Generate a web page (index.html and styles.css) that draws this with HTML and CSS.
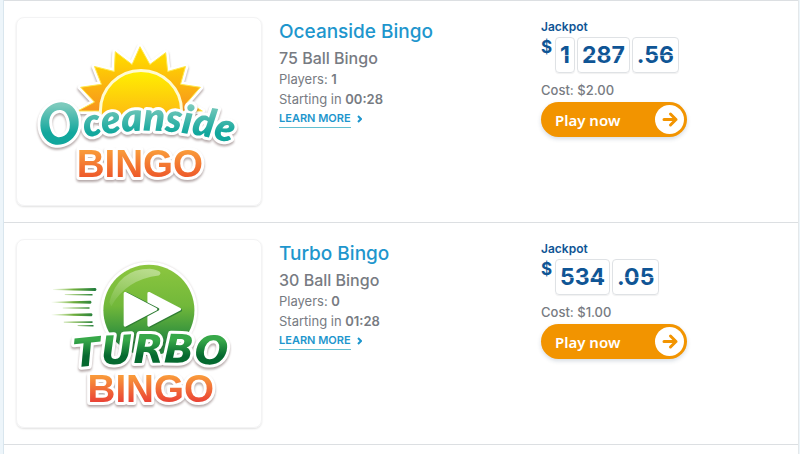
FILE: index.html
```
<!DOCTYPE html>
<html lang="en">
<head>
    <meta charset="utf-8">
    <title>Bingo Rooms</title>
    <link rel="stylesheet" href="styles.css">
</head>
<body>
    <main class="rooms">
        <section class="room">
            <div class="room-logo">
                <svg viewBox="0 0 246 189" role="img" aria-label="Oceanside Bingo">
                    <defs>
                        <linearGradient id="sun" x1="0" y1="0" x2="0" y2="1">
                            <stop offset="0.2" stop-color="#ffd500"/>
                            <stop offset="1" stop-color="#f7941e"/>
                        </linearGradient>
                        <linearGradient id="disc" x1="0" y1="0" x2="0" y2="1">
                            <stop offset="0" stop-color="#fff000"/>
                            <stop offset="1" stop-color="#fdb913"/>
                        </linearGradient>
                        <linearGradient id="sea" gradientUnits="userSpaceOnUse" x1="0" y1="88" x2="0" y2="128">
                            <stop offset="0" stop-color="#7ccabc"/>
                            <stop offset="0.7" stop-color="#12a79d"/>
                        </linearGradient>
                        <linearGradient id="orange" x1="0" y1="0" x2="0" y2="1">
                            <stop offset="0.2" stop-color="#f99a3a"/>
                            <stop offset="0.8" stop-color="#ee5a2a"/>
                        </linearGradient>
                        <path id="wave" d="M28 133 Q130 95 236 133"/>
                    </defs>
                    <path class="sticker" d="M61 94 L78 85 L64 70 L85 67 L78 49 L98 54 L99 34 L116 47 L124 29 L134 47 L150 35 L152 54 L170 49 L165 67 L185 70 L172 85 L187 94 Z" fill="#fff" stroke="#fff" stroke-width="6" stroke-linejoin="round"/>
                    <path d="M61 94 L78 85 L64 70 L85 67 L78 49 L98 54 L99 34 L116 47 L124 29 L134 47 L150 35 L152 54 L170 49 L165 67 L185 70 L172 85 L187 94 Z" fill="url(#sun)" stroke="#ffe94a" stroke-width="1"/>
                    <path d="M84 100 V94 A41 41 0 0 1 166 94 V100 Z" fill="url(#disc)" stroke="#fffbd0" stroke-width="3"/>
                    <g class="sticker">
                        <text class="logo-bingo" x="60" y="161" fill="url(#orange)">BINGO</text>
                    </g>
                    <g class="sticker">
                        <text class="logo-script" fill="url(#sea)"><textPath href="#wave"><tspan class="logo-initial">O</tspan>ceanside</textPath></text>
                    </g>
                </svg>
            </div>
            <div class="room-info">
                <h2>Oceanside Bingo</h2>
                <h3>75 Ball Bingo</h3>
                <p>Players: <b>1</b></p>
                <p>Starting in <b>00:28</b></p>
                <a class="more" href="#oceanside"><span>LEARN MORE</span>
                    <svg viewBox="0 0 5 8"><path d="M1 1 L4 4 L1 7"/></svg></a>
            </div>
            <div class="room-play">
                <h4>Jackpot</h4>
                <div class="jackpot">
                    <span class="currency">$</span>
                    <span class="digits">1</span>
                    <span class="digits">287</span>
                    <span class="digits">.56</span>
                </div>
                <p class="cost">Cost: <b>$2.00</b></p>
                <button class="play" type="button">Play now
                    <svg viewBox="0 0 29 29"><circle cx="14.5" cy="14.5" r="14.5"/><path d="M9 14.5 H21 M15.5 9 L21 14.5 L15.5 20"/></svg>
                </button>
            </div>
        </section>

        <section class="room">
            <div class="room-logo">
                <svg viewBox="0 0 246 189" role="img" aria-label="Turbo Bingo">
                    <defs>
                        <linearGradient id="ball" x1="0" y1="0" x2="0" y2="1">
                            <stop offset="0" stop-color="#8cc63f"/>
                            <stop offset="0.45" stop-color="#72b83a"/>
                            <stop offset="0.85" stop-color="#23883e"/>
                        </linearGradient>
                        <linearGradient id="shine" x1="0.6" y1="0" x2="0.2" y2="1">
                            <stop offset="0" stop-color="#fff" stop-opacity="0.4"/>
                            <stop offset="1" stop-color="#fff" stop-opacity="0.08"/>
                        </linearGradient>
                        <linearGradient id="speed" gradientUnits="userSpaceOnUse" x1="34" y1="0" x2="80" y2="0">
                            <stop offset="0" stop-color="#8cc63f" stop-opacity="0"/>
                            <stop offset="0.5" stop-color="#6fae3c"/>
                            <stop offset="1" stop-color="#1d7a3c"/>
                        </linearGradient>
                        <linearGradient id="green" gradientUnits="userSpaceOnUse" x1="0" y1="101" x2="0" y2="128">
                            <stop offset="0" stop-color="#37a849"/>
                            <stop offset="0.6" stop-color="#05692f"/>
                        </linearGradient>
                        <linearGradient id="red" x1="0" y1="0" x2="0" y2="1">
                            <stop offset="0.2" stop-color="#f99a3a"/>
                            <stop offset="0.8" stop-color="#ea4335"/>
                        </linearGradient>
                        <path id="curve" d="M58 129 Q138 119 240 129"/>
                    </defs>
                    <g fill="url(#speed)">
                        <path d="M36 49.5 L79 48.5 Q81 50 79 51.5 L36 50.5Z"/>
                        <path d="M48 55 L76 54.5 V56 L48 55.5Z"/>
                        <path d="M34 62.5 L74 61.5 Q76 63 74 64.5 L34 63.5Z"/>
                        <path d="M46 68.5 L73 68 V69.5 L46 69Z"/>
                        <path d="M33 75 L75 74 Q77 75.5 75 77 L33 76Z"/>
                        <path d="M47 82.5 L76 82 V84 L47 83.5Z"/>
                        <path d="M61 86.5 L77 86 V87.5 L61 87Z"/>
                    </g>
                    <circle class="halo" cx="133" cy="71" r="49" fill="#fff"/>
                    <circle cx="133" cy="71" r="46" fill="url(#ball)"/>
                    <path d="M93 63 Q102 29 134 29 Q149 31 143 36 Q110 40 95 67 Z" fill="url(#shine)"/>
                    <g fill="#2f7d34" stroke="#2f7d34" stroke-width="3" stroke-linejoin="round">
                        <path d="M134 55 L165 71 L134 87 Z"/>
                        <path d="M133 54 L164 70 L133 86 Z" fill="#fff" stroke="#fff"/>
                        <path d="M110 54 L142 70 L110 87 Z"/>
                        <path d="M109 54 L140 70 L109 86 Z" fill="#fff" stroke="#fff"/>
                    </g>
                    <g class="sticker">
                        <text class="logo-bingo" x="71" y="164" fill="url(#red)">BINGO</text>
                    </g>
                    <g class="sticker">
                        <text class="logo-turbo" fill="url(#green)"><textPath href="#curve">TURBO</textPath></text>
                    </g>
                </svg>
            </div>
            <div class="room-info">
                <h2>Turbo Bingo</h2>
                <h3>30 Ball Bingo</h3>
                <p>Players: <b>0</b></p>
                <p>Starting in <b>01:28</b></p>
                <a class="more" href="#turbo"><span>LEARN MORE</span>
                    <svg viewBox="0 0 5 8"><path d="M1 1 L4 4 L1 7"/></svg></a>
            </div>
            <div class="room-play">
                <h4>Jackpot</h4>
                <div class="jackpot">
                    <span class="currency">$</span>
                    <span class="digits">534</span>
                    <span class="digits">.05</span>
                </div>
                <p class="cost">Cost: <b>$1.00</b></p>
                <button class="play" type="button">Play now
                    <svg viewBox="0 0 29 29"><circle cx="14.5" cy="14.5" r="14.5"/><path d="M9 14.5 H21 M15.5 9 L21 14.5 L15.5 20"/></svg>
                </button>
            </div>
        </section>
    </main>
</body>
</html>
```
FILE: styles.css
```
* {
    box-sizing: border-box;
}

body {
    margin: 0;
    padding: 0 1px 0 3px;
    background: #edf5fa;
    font-family: Inter, "Liberation Sans", sans-serif;
    color: #777b82;
}

h2, h3, h4, p {
    margin: 0;
}

.rooms {
    min-height: 100vh;
    background: #fff;
    border-left: 1px solid #d9e6ee;
    border-right: 1px solid #e4e8ea;
}

.room {
    display: grid;
    grid-template-columns: 246px 246px 1fr;
    column-gap: 16px;
    padding: 16px 12px;
    border-top: 1px solid #dcdfe2;
}

.room:last-child {
    border-bottom: 1px solid #dcdfe2;
}

/* logo card */
.room-logo {
    height: 189px;
    border: 1px solid #f3f3f4;
    border-radius: 8px;
    box-shadow: 0 1px 2px rgba(0, 0, 0, 0.12);
}

.room-logo svg {
    display: block;
    width: 100%;
    height: 100%;
}

.sticker {
    filter: drop-shadow(0 2px 1px rgba(70, 40, 40, 0.4));
}

.halo {
    filter: drop-shadow(0 0 1px rgba(70, 40, 40, 0.2));
}

.sticker text {
    stroke: #fff;
    stroke-width: 6px;
    stroke-linejoin: round;
    paint-order: stroke;
}

.logo-bingo {
    font: bold 39px "Liberation Sans", sans-serif;
}

.logo-script {
    font: italic 800 40px Lato, sans-serif;
}

.logo-initial {
    font-size: 56px;
}

.logo-turbo {
    font: italic bold 40px "DejaVu Sans", sans-serif;
}

/* room details */
.room-info {
    padding-left: 1px;
}

.room-info h2 {
    font-size: 19px;
    font-weight: 500;
    line-height: 30px;
    color: #1e96cd;
}

.room-info h3 {
    font-size: 16px;
    font-weight: 500;
    line-height: 22px;
}

.room-info p {
    font-size: 13px;
    line-height: 20px;
}

b {
    font-weight: 600;
}

.more {
    display: flex;
    width: fit-content;
    align-items: center;
    gap: 6px;
    font-size: 11px;
    font-weight: 600;
    line-height: 18px;
    color: #1e96cd;
    text-decoration: none;
}

.more span {
    border-bottom: 1px solid #62bfd0;
}

.more svg {
    width: 5px;
    height: 8px;
    fill: none;
    stroke: #1e96cd;
    stroke-width: 2;
}

/* jackpot and button */
.room-play {
    padding-left: 1px;
}

.room-play h4 {
    font-size: 12px;
    font-weight: 600;
    line-height: 20px;
    color: #0f5595;
}

.jackpot {
    display: flex;
    gap: 2px;
    color: #0f5595;
    font-weight: 700;
}

.currency {
    width: 12px;
    font-size: 17px;
    line-height: 20px;
}

.digits {
    position: relative;
    height: 36px;
    padding: 0 4px;
    border: 1px solid #dfe2e5;
    border-radius: 4px;
    box-shadow: 0 1px 1px rgba(0, 0, 0, 0.06);
    font-size: 23px;
    line-height: 34px;
}

/* fold across the middle of the counter */
.digits::after {
    content: "";
    position: absolute;
    left: 0;
    right: 0;
    top: 50%;
    height: 1px;
    background: rgba(255, 255, 255, 0.6);
}

.cost {
    padding-top: 8px;
    font-size: 13px;
    line-height: 18px;
}

.cost, .cost b {
    font-weight: 500;
}

.play {
    display: flex;
    align-items: center;
    justify-content: space-between;
    width: 146px;
    height: 35px;
    margin-top: 3px;
    padding: 0 3px 0 14px;
    border: 0;
    border-radius: 18px;
    background: #f29400;
    box-shadow: 0 2px 4px rgba(30, 60, 100, 0.18);
    color: #fff;
    font: 600 15px "Noto Sans", sans-serif;
}

.play svg {
    width: 29px;
    height: 29px;
    fill: #fff;
}

.play path {
    fill: none;
    stroke: #f29400;
    stroke-width: 3;
    stroke-linecap: round;
    stroke-linejoin: round;
}
```
